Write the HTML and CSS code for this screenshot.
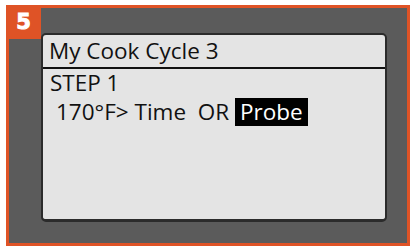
FILE: index.html
```html
<!DOCTYPE html>
<html lang="en">
<head>
    <meta charset="UTF-8">
    <title>My Cook Cycle 3</title>
    <link rel="stylesheet" href="styles.css">
</head>
<body>
    <div class="frame">
        <div class="badge">5</div>

        <!-- экран -->
        <div class="screen">
            <div class="screen-title">My Cook Cycle 3</div>
            <div class="screen-body">
                <div class="step">STEP 1</div>
                <div class="line">170°F&gt; Time&nbsp; OR <span class="sel">Probe</span></div>
            </div>
        </div>
    </div>
</body>
</html>
```

FILE: styles.css
```css
body {
    margin: 0;
    background-color: #ffffff;
    font-family: "Open Sans", sans-serif;
    color: #111;
}
.frame {
    position: relative;
    margin: 5px 0 0 6px;
    width: 404px;
    height: 241px;
    border: 3px solid #df5326;
    background-color: #5b5b5b;
    padding: 25px 0 0 32px;
    box-sizing: border-box;
}
.badge {
    position: absolute;
    top: -3px;
    left: -3px;
    width: 35px;
    height: 34px;
    background-color: #df5326;
    color: #fff;
    font-family: "DejaVu Sans", sans-serif;
    font-weight: bold;
    font-size: 21px;
    line-height: 34px;
    text-align: center;
    -webkit-text-stroke: 1px #fff;
    z-index: 2;
}
.screen {
    width: 346px;
    height: 189px;
    box-sizing: border-box;
    background-color: #e4e4e4;
    border: 2px solid #2b2b2b;
    border-bottom-width: 3px;
    border-radius: 5px;
}
.screen-title {
    height: 32px;
    border-bottom: 2px solid #111;
    padding-left: 6px;
    font-size: 22.5px;
    line-height: 32px;
}
.screen-body {
    padding-left: 7px;
    font-size: 22.5px;
}
.step {
    line-height: 28px;
}
.line {
    padding-left: 6px;
    line-height: 30px;
}
.sel {
    background-color: #000;
    color: #fff;
    padding: 0 5px;
    display: inline-block;
    line-height: 28px;
}
```
